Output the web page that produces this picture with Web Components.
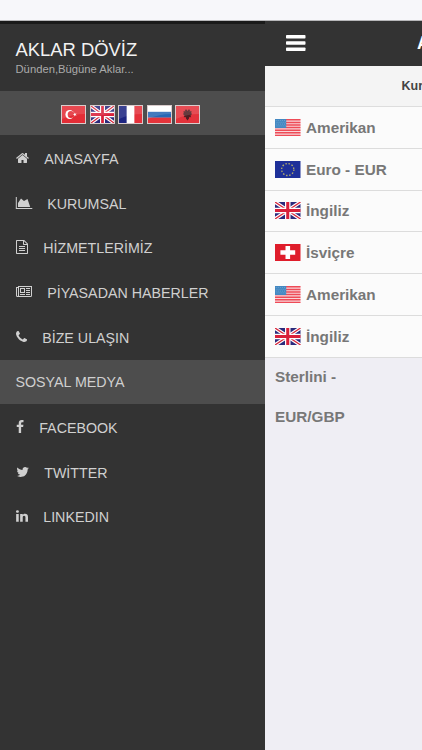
<!DOCTYPE html>
<html lang="tr">
<head>
<meta charset="utf-8">
<title>Aklar Döviz</title>
<style>
html,body{margin:0;height:100%;overflow:hidden}
body{font-family:"Liberation Sans",Arial,sans-serif;background:#efeef4}
</style>
</head>
<body>
<doviz-app></doviz-app>
<script>
const define = (name, build) => customElements.define(name, class extends HTMLElement {
  connectedCallback() {
    if (!this.shadowRoot) this.attachShadow({mode: 'open'}).innerHTML = build(this);
  }
});

const FLAGS = {
  tr: '<path fill="#e32d36" d="M0 0h25v17H0z"/><circle cx="8.3" cy="8.5" r="4.6" fill="#fff"/><circle cx="9.7" cy="8.5" r="3.5" fill="#e32d36"/><path fill="#fff" d="M11.8 8.5l1.500-.5.1-1.500.9 1.200 1.500-.4-.9 1.200.9 1.200-1.500-.4-.9 1.200-.1-1.500z"/>',
  gb: '<path fill="#2b2a7c" d="M0 0h25v17H0z"/><path stroke="#fff" stroke-width="3.6" d="M0 0l25 17M25 0L0 17"/><path stroke="#d8283c" stroke-width="1.300" d="M0 0l25 17M25 0L0 17"/><path stroke="#fff" stroke-width="5.400" d="M12.500 0v17M0 8.500h25"/><path stroke="#d8203a" stroke-width="3" d="M12.500 0v17M0 8.500h25"/>',
  fr: '<path fill="#fff" d="M0 0h25v17H0z"/><path fill="#1d2581" d="M0 0h8.300v17H0z"/><path fill="#e4303a" d="M16.700 0H25v17h-8.300z"/>',
  ru: '<path fill="#fff" d="M0 0h25v17H0z"/><path fill="#2667b5" d="M0 5.800h25v6H0z"/><path fill="#e5343b" d="M0 11.600h25V17H0z"/>',
  al: '<path fill="#e3323b" d="M0 0h25v17H0z"/><path fill="#4f1e22" d="M12.500 5l-1.500-1.700-1.500 1 1.200 1L8 5.300l.5 1.600-.9.300 1 .9-.9.700 1.600.6-.8 1.900 2-.4.400 1.700 1.600 2 1.600-2 .4-1.700 2 .4-.8-1.900 1.600-.6-.9-.7 1-.9-.9-.3.500-1.600-2.700 0 1.200-1-1.500-1z"/>',
  us: '<path fill="#f9d5d8" d="M0 0h25v17H0z"/><path stroke="#ee4b57" stroke-width="1.500" d="M0 .8h25M0 3.400h25M0 6h25M0 8.600h25M0 11.200h25M0 13.800h25M0 16.400h25"/><path fill="#4388c2" d="M0 0h11v9H0z"/><path stroke="#9cc4df" stroke-width=".6" stroke-dasharray=".7 1.300" d="M.8 1.500h10M1.600 3.300h9M.8 5.100h10M1.600 6.900h9"/>',
  eu: '<path fill="#1e3099" d="M0 0h25v17H0z"/><circle cx="12.500" cy="8.500" r="6" fill="none" stroke="#b5ad6b" stroke-width="1.300" stroke-dasharray="1.500 1.641"/>',
  ch: '<path fill="#df1d2b" d="M0 0h25v17H0z"/><path fill="#fff" d="M10.300 2h4.500v4.300h5v4.500h-5V15h-4.500v-4.200h-5V6.300h5z"/>'
};

/* width, height and drawing of each menu glyph; font glyphs sit on a 1792 unit grid */
const em = (x, y, d) => `<g transform="translate(${x} ${y}) scale(.0078125)"><path d="${d}"/></g>`;
const ICONS = {
  home: [13, em(-.5, 0, 'M1472 992v480q0 26-19 45t-45 19h-384v-384h-256v384h-384q-26 0-45-19t-19-45v-480q0-1 .5-3t.5-3l575-474 575 474q1 2 1 6zm223-69l-62 74q-8 9-21 11h-3q-13 0-21-7l-692-577-692 577q-12 8-24 7-13-2-21-11l-62-74q-8-10-7-23.500t11-21.500l719-599q32-26 76-26t76 26l244 204v-195q0-14 9-23t23-9h192q14 0 23 9t9 23v408l219 182q10 8 11 21.500t-7 23.500z')],
  chart: [16, '<path d="M-.2 1h1v11h15.500v1H-.2zM2 11V7l3-4.500L8 5l3.500-2L14.200 11z"/>'],
  file: [12, '<path fill-rule="evenodd" d="M.8 0h7.400L12 3.800v9.400q0 .8-.8.800H.8q-.8 0-.8-.8V.8Q0 0 .8 0zM1 1v12h10V5H7.800Q7 5 7 4.200V1zm7 .2V4h2.800zM3 6h6v1H3zm0 2h6v1H3zm0 2h6v1H3z"/>'],
  news: [16, '<path fill-rule="evenodd" d="M2 1h14v9.500q0 1.500-1.500 1.500h-13Q0 12 0 10.500V2h2zM1 3v7.500q0 .5.500.5t.5-.5V3zm2-1v9h11.500q.5 0 .5-.5V2zm1 1h5v5H4zm1 1v3h3V4zm5-1h4v1h-4zm0 2h4v1h-4zm0 2h4v1h-4zM4 9h5v1H4zm6 0h4v1h-4z"/>'],
  phone: [11, em(-1.500, 0, 'M1600 1240q0 27-10 70.500t-21 68.500q-21 50-122 106-94 51-186 51-27 0-53-3.500t-57.500-12.500-47-14.500-55.500-20.500-49-18q-98-35-175-83-127-79-264-216t-216-264q-48-77-83-175-3-9-18-49t-20.500-55.500-14.500-47-12.500-57.500-3.500-53q0-92 51-186 56-101 106-122 25-11 68.500-21t70.500-10q14 0 21 3 18 6 53 76 11 19 30 54t35 63.500 31 53.500q3 4 17.500 25t21.500 35.500 7 28.500q0 20-28.500 50t-62 55-62 53-28.500 46q0 9 5 22.500t8.500 20.500 14 24 11.500 19q76 137 174 235t235 174q2 1 19 11.500t24 14 20.500 8.500 22.500 5q18 0 46-28.500t53-62 55-62 50-28.500q14 0 28.500 7t35.500 21.500 25 17.500q25 15 53.500 31t63.500 35 54 30q70 35 76 53 3 7 3 21z')],
  facebook: [8, em(-3, 0, 'M1343 12v264h-157q-86 0-116 36t-30 108v189h293l-39 296h-254v759h-306v-759h-255v-296h255v-218q0-186 104-288.500t277-102.500q147 0 228 12z')],
  twitter: [13, em(-.3, 0, 'M1684 408q-67 98-162 167 1 14 1 42 0 130-38 259.500t-115.500 248.500-184.500 210.500-258 146-323 54.500q-271 0-496-145 35 4 78 4 225 0 401-138-105-2-188-64.500t-114-159.500q33 5 61 5 43 0 85-11-112-23-185.500-111.500t-73.500-205.500v-4q68 38 146 41-66-44-105-115t-39-154q0-88 44-163 121 149 294.500 238.500t371.500 99.500q-8-38-8-74 0-134 94.500-228.500t228.500-94.500q140 0 236 102 109-21 205-78-37 115-142 178 93-10 186-50z')],
  linkedin: [12, em(-1, 0, 'M477 625v991h-330v-991h330zm21-306q1 73-50.500 122t-135.500 49h-2q-82 0-132-49t-50-122q0-74 51.500-122.500t134.500-48.500 133 48.500 51 122.500zm1166 729v568h-329v-530q0-105-40.500-164.500t-126.500-59.500q-63 0-105.500 34.500t-63.500 85.500q-11 30-11 81v553h-329q2-399 2-647t-1-296l-1-48h329v144h-2q20-32 41-56t56.500-52 87-43.500 114.500-15.500q171 0 275 113.500t104 332.500z')]
};

define('flag-icon', el => `<style>
  :host{display:block;width:25.500px;height:17px;flex:none}
  :host([framed]){box-sizing:border-box;width:25px;height:19px;border:1px solid #d9cccc}
  svg{display:block;width:100%;height:100%}
  </style><svg viewBox="0 0 25 17" preserveAspectRatio="none">${FLAGS[el.getAttribute('code')]}${el.hasAttribute('framed') ? '<path fill="#fff" opacity=".13" d="M0 0h25v8Q12 8 0 13z"/>' : ''}</svg>`);

define('menu-item', el => {
  const [w, art] = ICONS[el.getAttribute('icon')];
  return `<style>
  :host{display:flex;align-items:center;gap:16px;height:44.600px;padding-left:15.500px;color:#d0d0d0;font-size:14.250px;line-height:20px;white-space:nowrap}
  svg{display:block;height:14px;overflow:visible;fill:currentColor;flex:none;margin-top:-2px}
  span{margin-left:-.3px}
  </style><svg width="${w}" height="14">${art}</svg><span><slot></slot></span>`;
});

define('menu-band', () => `<style>
  :host{display:flex;align-items:center;box-sizing:border-box;height:44px;padding-left:15.500px;background:#4d4d4d;color:#d0d0d0;font-size:14.250px;white-space:nowrap}
  </style><slot></slot>`);

define('side-menu', () => `<style>
  :host{display:block;width:265px;flex:none;background:#333;box-sizing:border-box;border-top:3px solid #1a1a1a}
  header{height:67px;box-sizing:border-box;padding:15px 0 0 15.500px;color:#f2f2f2}
  h1{margin:0;font-weight:400;font-size:18.400px;line-height:22px;white-space:nowrap}
  p{margin:0;font-size:11.250px;line-height:16px;color:#aaa;white-space:nowrap}
  .flags{display:flex;gap:3.500px;padding:2px 0 0 45.500px}
  .first{padding-top:2px}
  </style>
  <header><h1>AKLAR DÖVİZ</h1><p>Dünden,Bügüne Aklar...</p></header>
  <menu-band><div class="flags">${['tr','gb','fr','ru','al'].map(c => `<flag-icon framed code="${c}"></flag-icon>`).join('')}</div></menu-band>
  <nav class="first">
  <menu-item icon="home">ANASAYFA</menu-item><menu-item icon="chart">KURUMSAL</menu-item><menu-item icon="file">HİZMETLERİMİZ</menu-item><menu-item icon="news">PİYASADAN HABERLER</menu-item><menu-item icon="phone">BİZE ULAŞIN</menu-item>
  </nav>
  <menu-band>SOSYAL MEDYA</menu-band>
  <nav class="first">
  <menu-item icon="facebook">FACEBOOK</menu-item><menu-item icon="twitter">TWİTTER</menu-item><menu-item icon="linkedin">LINKEDIN</menu-item>
  </nav>`);

define('rate-row', el => `<style>
  :host{display:flex;align-items:center;gap:5.500px;box-sizing:border-box;height:41.750px;padding-left:10px;background:#fbfbfb;border-bottom:1px solid #dcdcdc;color:#777;font-weight:700;font-size:15.300px;white-space:nowrap}
  span{padding-top:1px}
  </style><flag-icon code="${el.getAttribute('code')}"></flag-icon><span><slot></slot></span>`);

define('rates-page', () => `<style>
  :host{display:block;width:157px;flex:none;overflow:hidden;background:#efeef4}
  .bar{display:flex;align-items:center;height:44.500px;padding-left:21px;background:#333;color:#fff;font-weight:700;font-size:17.500px}
  .bar svg{display:block;flex:none}
  .bar span{padding-left:111px;white-space:nowrap}
  .cols{box-sizing:border-box;height:41.500px;display:flex;align-items:center;padding-left:136.500px;background:#f4f4f4;border-bottom:1px solid #ddd;color:#444;font-weight:700;font-size:12.500px}
  .rest{margin-top:-1px;padding-left:10px;color:#777;font-weight:700;font-size:15.300px;line-height:40.800px}
  </style>
  <div class="bar"><svg width="20" height="18" fill="#fff"><rect y="1" width="19.500" height="3.400" rx=".7"/><rect y="7.300" width="19.500" height="3.400" rx=".7"/><rect y="13.600" width="19.500" height="3.400" rx=".7"/></svg><span>A</span></div>
  <div class="cols">Kur</div>
  <rate-row code="us">Amerikan</rate-row><rate-row code="eu">Euro - EUR</rate-row><rate-row code="gb">İngiliz</rate-row><rate-row code="ch">İsviçre</rate-row><rate-row code="us">Amerikan</rate-row><rate-row code="gb">İngiliz</rate-row>
  <div class="rest">Sterlini -<br>EUR/GBP</div>`);

define('doviz-app', () => `<style>
  :host{display:flex;flex-direction:column;width:422px;height:750px;overflow:hidden}
  .status{height:21px;box-sizing:border-box;flex:none;background:#f7f7fa;border-bottom:1px solid #b8b8ba}
  main{display:flex;flex:1;min-height:0}
  </style><div class="status"></div><main><side-menu></side-menu><rates-page></rates-page></main>`);
</script>
</body>
</html>
